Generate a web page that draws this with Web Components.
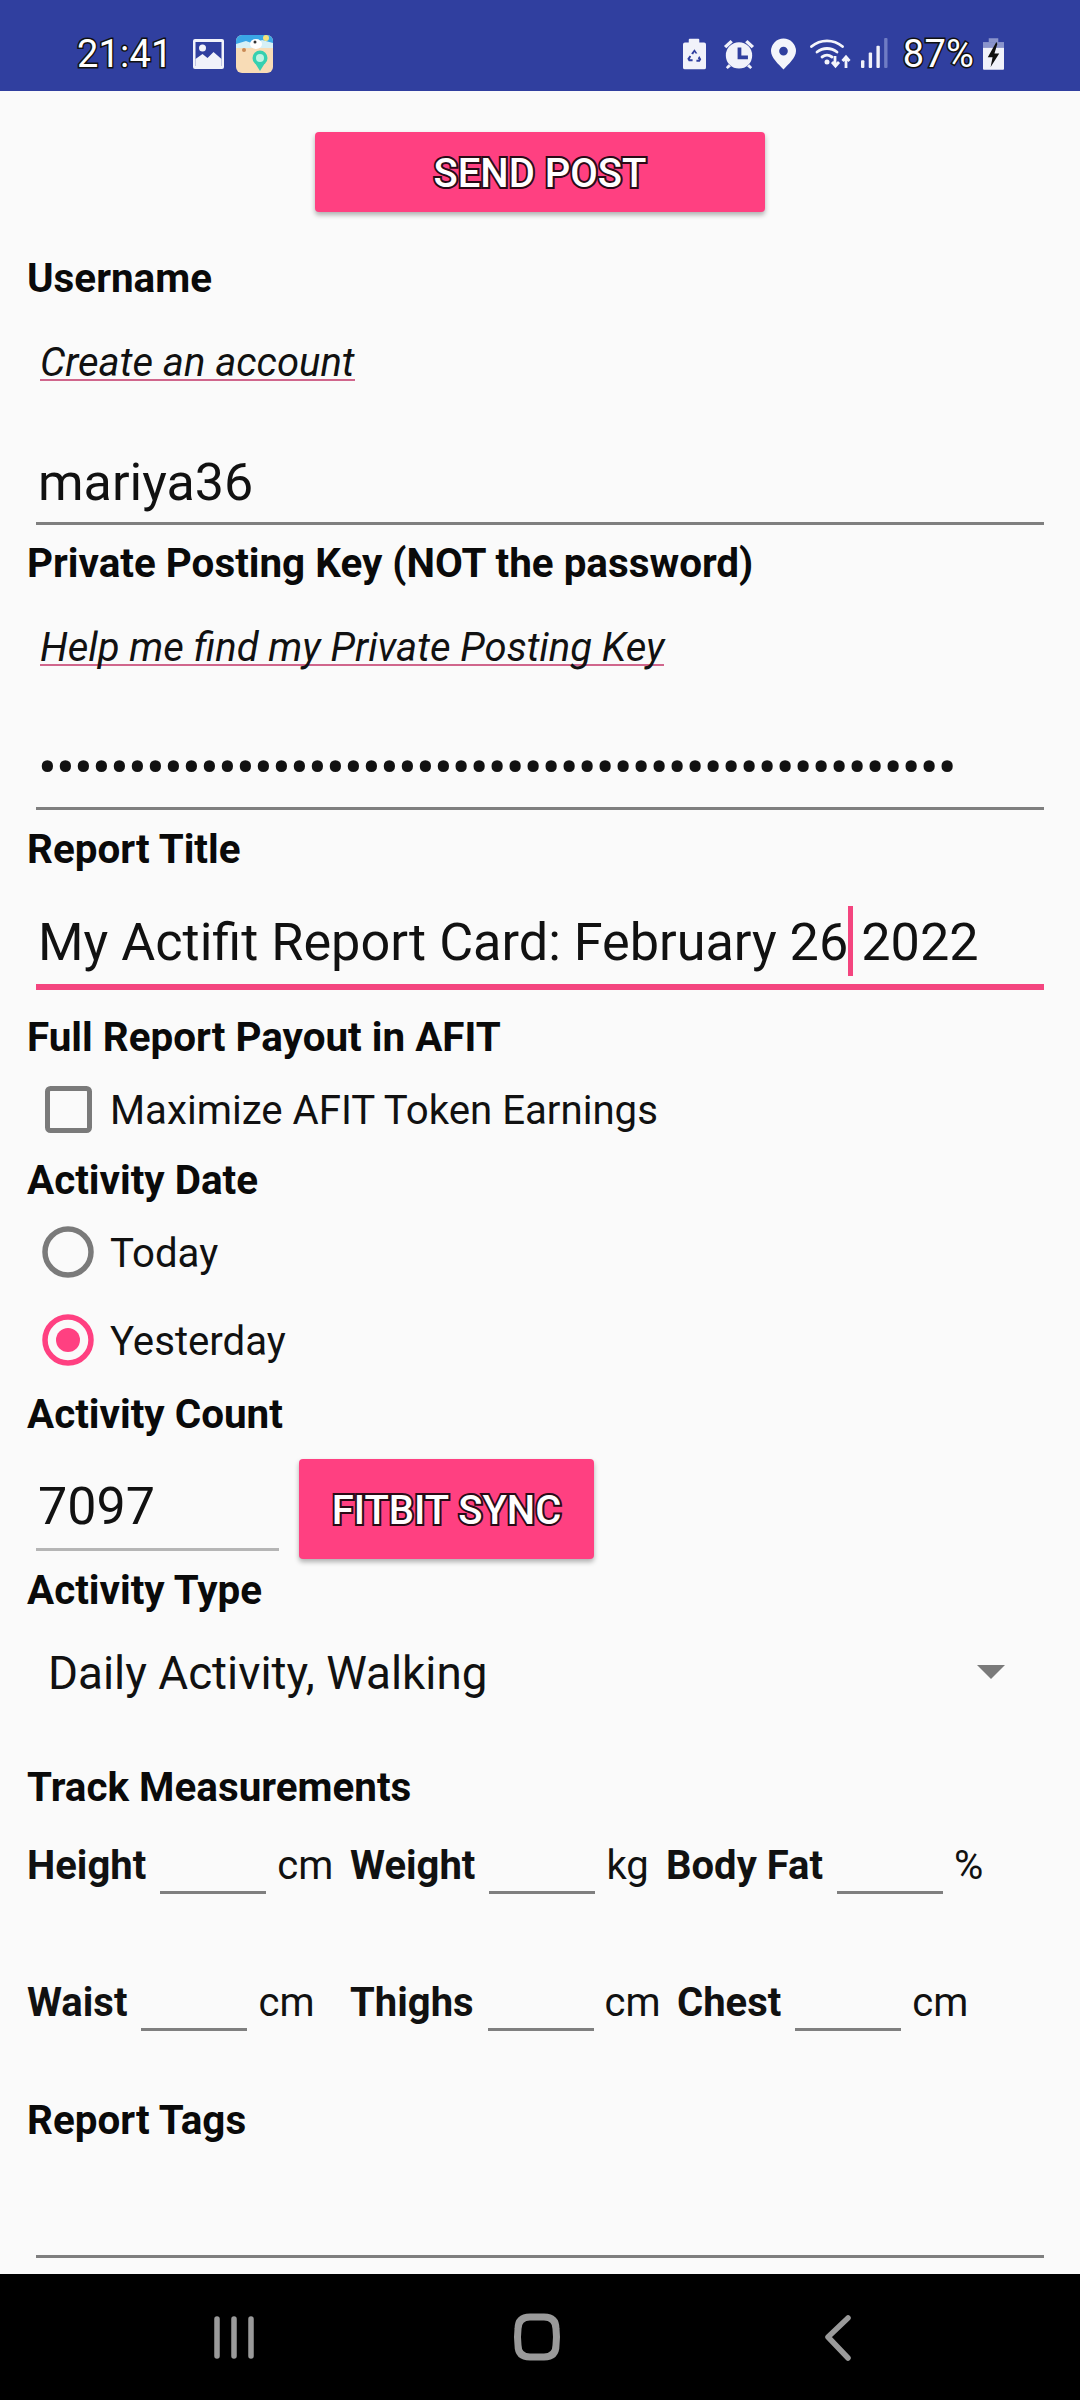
<!DOCTYPE html>
<html>
<head>
<meta charset="utf-8">
<style>
  html, body { margin: 0; padding: 0; background: #fafafa; }
  body { width: 1080px; height: 2400px; overflow: hidden; font-family: Roboto, "Liberation Sans", sans-serif; }
</style>
</head>
<body>
<phone-status></phone-status>
<report-form></report-form>
<phone-nav></phone-nav>

<script>
// status bar across the top
class PhoneStatus extends HTMLElement {
  constructor(){
    super();
    this.attachShadow({mode:"open"}).innerHTML = `
    <style>
      :host { display: flex; align-items: center; height: 91px; background: #303f9f; box-sizing: border-box; padding: 16px 0 0 77px; color: #fff; }
      .txt { font-size: 38px; letter-spacing: 0.2px; -webkit-text-stroke: 3px #111; paint-order: stroke fill; line-height: 40px; }
      svg { display: block; flex: none; }
      .left { display: flex; align-items: center; }
      .right { display: flex; align-items: center; margin-left: auto; margin-right: 76px; }
    </style>
    <div class="left">
      <span class="txt">21:41</span>
      <svg style="margin-left:20px" width="31" height="30" viewBox="0 0 31 30"><rect width="31" height="30" rx="2" fill="#f1f2fa"/><rect x="2.500" y="3" width="26" height="24" fill="#303f9f"/><circle cx="9.500" cy="9" r="3.500" fill="#f1f2fa"/><path d="M2.500 27v-7l7-5 5 4 6-6 8 7v7z" fill="#f1f2fa"/></svg>
      <svg style="margin-left:12px" width="37" height="38" viewBox="0 0 37 38"><defs><clipPath id="c"><rect width="37" height="38" rx="6"/></clipPath></defs><g clip-path="url(#c)"><rect width="37" height="38" fill="#f8dcb6"/><rect width="37" height="9" fill="#3aa7e6"/><path d="M0 9l10-3 8 3 8-4 11 3v5H0z" fill="#d6f0f6"/><circle cx="30" cy="3" r="3" fill="#f6e27a"/><ellipse cx="20" cy="9" rx="6" ry="5" fill="#fff"/><circle cx="19" cy="7" r="1.500" fill="#333"/><circle cx="24" cy="23" r="7.500" fill="#35d0b0"/><path d="M19 28l5 8 5-8z" fill="#35d0b0"/><circle cx="24" cy="23" r="4" fill="#bff3e3"/><circle cx="8" cy="15" r="2" fill="#c98a55"/></g></svg>
    </div>
    <div class="right">
      <svg width="23" height="32" viewBox="0 0 24 32"><path d="M7 0h9a1 1 0 0 1 1 1v3h5a2 2 0 0 1 2 2v24a2 2 0 0 1-2 2H2a2 2 0 0 1-2-2V6a2 2 0 0 1 2-2h4V1a1 1 0 0 1 1-1z" fill="#f1f2fa"/><path d="M12 11l3 4.500h-2l-1-1.500-1.500 2.500-2-1zM17 18l2 3.500-1.500 2.500h-3.500v-2h2.500l-1-1.500zM7 17.500l1.500 1-1.500 3h3v2H6l-1.500-2.500z" fill="#303f9f"/></svg>
      <svg style="margin-left:17px" width="32" height="32" viewBox="0 0 34 32"><circle cx="17" cy="17.500" r="14" fill="#f1f2fa"/><path d="M15.500 9h4v8.500h7v4h-11z" fill="#303f9f"/><path d="M1 7.500l7-6.500 2.500 2.500-7 6.500zM33 7.500l-7-6.500-2.500 2.500 7 6.500zM6 27l-3 3 2 2 3.500-3zM28 27l3 3-2 2-3.500-3z" fill="#f1f2fa"/></svg>
      <svg style="margin-left:16px" width="25" height="32" viewBox="0 0 26 32"><path fill-rule="evenodd" d="M13 0a13 13 0 0 1 13 13c0 7-8 14-13 19C8 27 0 20 0 13A13 13 0 0 1 13 0zm0 8.500a4.500 4.500 0 1 0 0 9 4.500 4.500 0 0 0 0-9z" fill="#f4f5fb"/></svg>
      <svg style="margin-left:14px" width="42" height="32" viewBox="0 0 42 32"><g fill="none" stroke="#f4f5fb" stroke-width="2.800" stroke-linecap="round"><path d="M1.500 8.500a24 24 0 0 1 31 0"/><path d="M7 14a16 16 0 0 1 20 0"/><path d="M12 19a8.500 8.500 0 0 1 10 0"/></g><circle cx="17" cy="24" r="2.500" fill="#f4f5fb"/><path d="M25 18v9M22 24l3.500 4 3.500-4M36 30v-10M32.500 23l3.500-4 3.500 4" fill="none" stroke="#f4f5fb" stroke-width="2.800"/></svg>
      <svg style="margin-left:9px" width="27" height="31" viewBox="0 0 28 32"><rect x="0" y="23" width="3.500" height="8" rx="1" fill="#f1f2fa"/><rect x="8" y="15" width="3.500" height="16" rx="1" fill="#f1f2fa"/><rect x="16" y="8" width="3.500" height="23" rx="1" fill="#f1f2fa"/><rect x="24" y="0" width="3.500" height="31" rx="1" fill="#6f7cc4"/></svg>
      <span class="txt" style="margin-left:15px">87%</span>
      <svg style="margin-left:9px" width="21" height="32" viewBox="0 0 22 33"><path d="M6 0h10v4H6z" fill="#8a94cc"/><path d="M0 4h22v6H0z" fill="#8a94cc"/><path d="M0 10h22v22a1 1 0 0 1-1 1H1a1 1 0 0 1-1-1z" fill="#f1f2fa"/><path d="M14 4L5 20h5l-2 10 9-14h-5l3-10z" fill="#111"/></svg>
    </div>`;
  }
}

// bold section label
class FieldLabel extends HTMLElement {
  constructor(){
    super();
    this.attachShadow({mode:"open"}).innerHTML = `
    <style>
      :host { display: block; height: 50px; line-height: 52px; padding-left: 27px; font-size: 40.400px; font-weight: 700; color: #0a0a0a; white-space: nowrap; }
    </style><slot></slot>`;
  }
}

// italic link with the pink underline
class HelpLink extends HTMLElement {
  constructor(){
    super();
    this.attachShadow({mode:"open"}).innerHTML = `
    <style>
      :host { display: flex; align-items: center; height: 118px; padding-left: 40px; font-size: 40px; font-style: italic; color: #111; }
      span { box-shadow: inset 0 -2px 0 #d0668c; line-height: 42px; display: block; height: 39px; margin-bottom: 1px; white-space: nowrap; }
    </style><span><slot></slot></span>`;
  }
}

// text field with a line under it
class LineField extends HTMLElement {
  constructor(){
    super();
    this.attachShadow({mode:"open"}).innerHTML = `
    <style>
      :host { display: block; box-sizing: border-box; margin: 0 36px; padding-left: 2px; font-size: 52px; color: #111; border-bottom: 3px solid #7f7f7f; white-space: nowrap; height: 104px; padding-top: 32px; line-height: 60px; }
      :host([active]) { border-bottom: 6px solid #f4457f; height: 116px; padding-top: 39px; font-size: 52.200px; }
      :host([short]) { margin: 0 0 0 36px; width: 243px; height: 92px; padding-top: 18px; border-bottom-color: #b5b5b5; }
    </style><slot></slot>`;
  }
}

class PinkButton extends HTMLElement {
  constructor(){
    super();
    this.attachShadow({mode:"open"}).innerHTML = `
    <style>
      :host { display: flex; align-items: center; justify-content: center; box-sizing: border-box; padding-top: 2px; background: #ff4081; border-radius: 4px; box-shadow: 0 3px 5px rgba(0,0,0,.3); color: #fff; font-size: 40px; font-weight: 500; -webkit-text-stroke: 4px #2a0a16; paint-order: stroke fill; white-space: nowrap; }
    </style><slot></slot>`;
  }
}

// checkbox or radio with its caption
class ChoiceRow extends HTMLElement {
  constructor(){
    super();
    var type = this.getAttribute("type");
    var mark = "";
    if(type === "check"){
      mark = `<svg width="47" height="47" viewBox="0 0 47 47"><rect x="2.500" y="2.500" width="42" height="42" rx="3" fill="none" stroke="#7a7a7a" stroke-width="5"/></svg>`;
    }
    if(type === "radio"){
      mark = `<svg width="52" height="52" viewBox="0 0 52 52"><circle cx="26" cy="26" r="23" fill="none" stroke="#7a7a7a" stroke-width="5.500"/></svg>`;
    }
    if(type === "radio-on"){
      mark = `<svg width="52" height="52" viewBox="0 0 52 52"><circle cx="26" cy="26" r="23" fill="none" stroke="#ff4081" stroke-width="5.500"/><circle cx="26" cy="26" r="12" fill="#ff4081"/></svg>`;
    }
    this.attachShadow({mode:"open"}).innerHTML = `
    <style>
      :host { display: flex; align-items: center; height: 60px; font-size: 40.200px; color: #111; white-space: nowrap; }
      .box { width: 52px; display: flex; justify-content: center; margin-left: 42px; margin-right: 16px; }
      span { padding-top: 3px; }
    </style><div class="box">${mark}</div><span><slot></slot></span>`;
  }
}

// one row of the measurements, built from the list in "items"
class MeasureRow extends HTMLElement {
  constructor(){
    super();
    this.attachShadow({mode:"open"}).innerHTML = `
    <style>
      :host { display: flex; height: 60px; font-size: 40px; line-height: 62px; color: #111; white-space: nowrap; padding-left: 27px; }
      .part { display: flex; flex: none; }
      b { font-weight: 700; font-size: 40px; }
      i { display: block; flex: none; box-sizing: border-box; width: 106px; height: 59px; border-bottom: 3px solid #7f7f7f; margin: 0 11px 0 14px; }
    </style>`;
    var list = JSON.parse(this.getAttribute("items"));
    list.forEach((m) => {
      var part = document.createElement("div");
      part.className = "part";
      part.style.width = m[2] + "px";
      var b = document.createElement("b"); b.textContent = m[0];
      var i = document.createElement("i");
      var s = document.createElement("span"); s.textContent = m[1];
      part.append(b, i, s);
      this.shadowRoot.appendChild(part);
    });
  }
}

// the form itself
class ReportForm extends HTMLElement {
  constructor(){
    super();
    this.attachShadow({mode:"open"}).innerHTML = `
    <style>
      :host { display: block; height: 2183px; background: #fafafa; overflow: hidden; color: #111; }
      .send { display: flex; justify-content: center; padding-top: 41px; height: 121px; }
      .send pink-button { width: 450px; height: 80px; }
      .gap { margin-top: 13px; }
      .sync { display: flex; align-items: flex-start; height: 106px; padding-top: 20px; }
      .sync pink-button { width: 295px; height: 100px; margin-left: 20px; }
      .dots { font-size: 56px; letter-spacing: -0.9px; }
      .caret { display: inline-block; width: 5px; height: 70px; margin: -10px -5px -10px 0; vertical-align: -6px; background: #f4457f; }
      .select { display: flex; align-items: center; box-sizing: border-box; height: 80px; margin-top: 17px; padding: 2px 0 0 48px; font-size: 45.800px; color: #111; position: relative; }
      .arrow { position: absolute; left: 977px; top: 33px; width: 0; height: 0; border: 14px solid transparent; border-top: 14px solid #7a7a7a; border-bottom: 0; }
    </style>
    <div class="send"><pink-button>SEND POST</pink-button></div>
    <field-label>Username</field-label>
    <help-link>Create an account</help-link>
    <line-field>mariya36</line-field>
    <field-label class="gap">Private Posting Key (NOT the password)</field-label>
    <help-link>Help me find my Private Posting Key</help-link>
    <line-field class="dots">•••••••••••••••••••••••••••••••••••••••••••••••••••</line-field>
    <field-label style="margin-top:14px">Report Title</field-label>
    <line-field active>My Actifit Report Card: February 26<span class="caret"></span>&nbsp;2022</line-field>
    <field-label style="margin-top:22px">Full Report Payout in AFIT</field-label>
    <choice-row type="check" style="margin-top:17px">Maximize AFIT Token Earnings</choice-row>
    <field-label style="margin-top:16px">Activity Date</field-label>
    <choice-row type="radio" style="margin-top:17px">Today</choice-row>
    <choice-row type="radio-on" style="margin-top:28px">Yesterday</choice-row>
    <field-label style="margin-top:19px">Activity Count</field-label>
    <div class="sync"><line-field short>7097</line-field><pink-button>FITBIT SYNC</pink-button></div>
    <field-label>Activity Type</field-label>
    <div class="select">Daily Activity, Walking<div class="arrow"></div></div>
    <field-label style="margin-top:50px">Track Measurements</field-label>
    <measure-row style="margin-top:23px" items='[["Height","cm",323],["Weight","kg",316],["Body Fat","%",400]]'></measure-row>
    <measure-row style="margin-top:77px" items='[["Waist","cm",323],["Thighs","cm",327],["Chest","cm",300]]'></measure-row>
    <field-label style="margin-top:63px">Report Tags</field-label>
    <line-field style="height:113px"></line-field>`;
  }
}

// soft keys at the bottom
class PhoneNav extends HTMLElement {
  constructor(){
    super();
    this.attachShadow({mode:"open"}).innerHTML = `
    <style>
      :host { display: block; height: 126px; background: #000; }
      svg { display: block; }
    </style>
    <svg width="1080" height="126" viewBox="0 0 1080 126">
      <g stroke="#9a9a9a" stroke-width="5.500" stroke-linecap="round" stroke-linejoin="round" fill="none">
        <path d="M217 45v37M234 45v37M251 45v37"/>
        <path d="M530 43h14q12 0 12 12q1 8 0 16q0 12-12 12h-14q-12 0-12-12q-1-8 0-16q0-12 12-12z" stroke-width="7"/>
        <path d="M848 44l-20 19 20 21"/>
      </g>
    </svg>`;
  }
}

customElements.define("phone-status", PhoneStatus);
customElements.define("field-label", FieldLabel);
customElements.define("help-link", HelpLink);
customElements.define("line-field", LineField);
customElements.define("pink-button", PinkButton);
customElements.define("choice-row", ChoiceRow);
customElements.define("measure-row", MeasureRow);
customElements.define("report-form", ReportForm);
customElements.define("phone-nav", PhoneNav);
</script>
</body>
</html>
